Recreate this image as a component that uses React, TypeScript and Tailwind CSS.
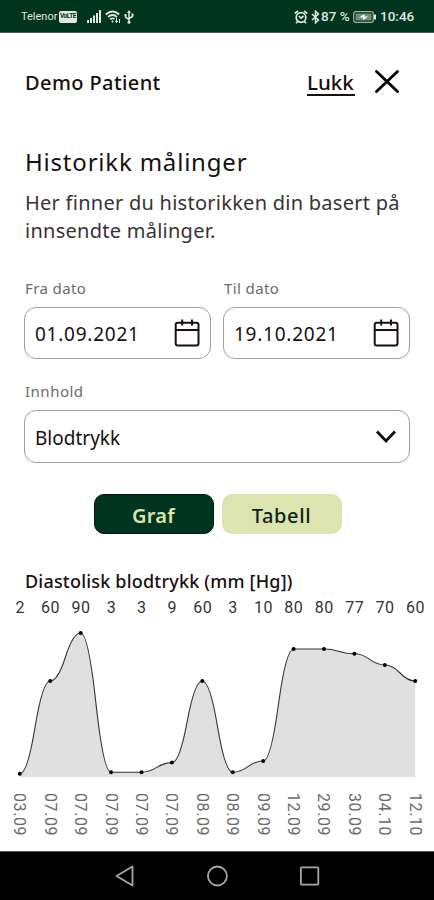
import React from "react"

const measurements = [
  { value: 2, date: "03.09" },
  { value: 60, date: "07.09" },
  { value: 90, date: "07.09" },
  { value: 3, date: "07.09" },
  { value: 3, date: "07.09" },
  { value: 9, date: "07.09" },
  { value: 60, date: "08.09" },
  { value: 3, date: "08.09" },
  { value: 10, date: "09.09" },
  { value: 80, date: "12.09" },
  { value: 80, date: "29.09" },
  { value: 77, date: "30.09" },
  { value: 70, date: "04.10" },
  { value: 60, date: "12.10" },
]

const STEP = 30.42
const BASE = 157

const points = measurements.map((m, i) => ({
  x: 19.8 + i * STEP,
  y: BASE - m.value * 1.6,
}))

const line = points.slice(1).reduce((d, p, i) => {
  const prev = points[i]
  const midX = (prev.x + p.x) / 2
  const midY = (prev.y + p.y) / 2
  return `${d} Q ${(prev.x + midX) / 2} ${prev.y} ${midX} ${midY} Q ${(p.x + midX) / 2} ${p.y} ${p.x} ${p.y}`
}, `M ${points[0].x} ${points[0].y}`)

const area = `${line} V ${BASE} H ${points[0].x} Z`

const CalendarIcon = () => (
  <svg width="26" height="30" viewBox="0 0 26 30" fill="none" stroke="#1c0f14" strokeWidth="2">
    <rect x="1.7" y="4.7" width="22.8" height="22.8" rx="2" />
    <path d="M1.7 12H24.5M8.2 1.5V7.5M18 1.5V7.5" />
  </svg>
)

const DateField = ({ label, value }: { label: string; value: string }) => (
  <div className="w-[187px]">
    <div className="h-[27px] pl-[1px] text-[15px] leading-[16px] tracking-[0.4px] text-[#6b6b6b]">
      {label}
    </div>
    <div className="flex h-[52px] items-center justify-between rounded-[12px] border border-[#a0a0a0] pr-[10px] pl-[10px]">
      <span className="pt-[3px] text-[19px] tracking-[0.75px]">{value}</span>
      <CalendarIcon />
    </div>
  </div>
)

const StatusBar = () => (
  <div className="flex h-[33px] items-center justify-between border-b border-[#4b5a50] bg-[#01341f] pt-[1px] pr-[19px] pl-[21px] font-[Roboto] text-[#dfe8e2]">
    <div className="flex items-center">
      <span className="w-[36px] pt-[2px] text-[11px]">Telenor</span>
      <span className="ml-[2px] flex h-[12px] w-[18px] items-center justify-center overflow-hidden rounded-[2px] bg-[#dfe8e2] text-[6.5px] font-bold tracking-[-0.4px] text-[#01341f]">
        VoLTE
      </span>
      <svg className="ml-[10px]" width="14" height="13" viewBox="0 0 14 13" fill="currentColor">
        <path d="M0 10h2v3H0zM3 8h2v5H3zM6 5.500h2v7.500H6zM9 3h2v10H9zM12 0h2v13h-2z" />
      </svg>
      <svg className="ml-[4px]" width="16" height="14" viewBox="0 0 16 14" fill="none" stroke="currentColor" strokeWidth="1.700">
        <path d="M.8 4.500Q7.500-1.500 14.200 4.500M3 7Q7.500 3 12 7M5.200 9.400Q7.500 7.400 9.500 9" />
        <circle cx="7.500" cy="11.500" r="1" fill="currentColor" stroke="none" />
        <path d="M11.500 8v4.500M10 11l1.500 1.500L13 11M14.500 13V9" strokeWidth="1" />
      </svg>
      <svg className="ml-[3px]" width="10" height="14" viewBox="0 0 10 14" fill="none" stroke="currentColor" strokeWidth="1.500">
        <path d="M5 2v10M1.500 5v2.200L5 9.500M8.500 4.500v2L5 8.500" />
        <path d="M5 0l2 3H3zM.5 4h2v2h-2zM7.500 3.500h2v2h-2z" fill="currentColor" stroke="none" />
        <circle cx="5" cy="12.300" r="1.500" fill="currentColor" stroke="none" />
      </svg>
    </div>
    <div className="flex items-center">
      <svg width="14" height="14" viewBox="0 0 14 14" fill="none" stroke="currentColor" strokeWidth="1.700">
        <circle cx="7" cy="7.500" r="4.800" />
        <path d="M.8 3.500L4 1M13.200 3.500L10 1M4.800 6L7 8.200L9.500 6M3.500 11.500L2 13.200M10.500 11.500L12 13.200" />
      </svg>
      <svg className="ml-[3px]" width="9" height="14" viewBox="0 0 9 14" fill="none" stroke="currentColor" strokeWidth="1.500">
        <path d="M1 4L7.500 10L4.500 12.800V1.200L7.500 4L1 10" />
      </svg>
      <span className="ml-[1px] w-[32px] text-[13.500px] font-medium whitespace-nowrap">87 %</span>
      <svg width="24" height="12" viewBox="0 0 24 12" fill="none">
        <rect x=".7" y=".7" width="19.600" height="10.600" rx="2" stroke="#9db3a5" strokeWidth="1.200" />
        <rect x="2.500" y="2.500" width="16" height="7" fill="#6d8f7b" />
        <path d="M6 6.500L11.500 3V5.500H15L10 9V6.500Z" fill="#fff" />
        <path d="M22 3.500V8.500" stroke="#dfe8e2" strokeWidth="2" />
      </svg>
      <span className="ml-[3px] w-[35px] text-[13.500px] font-medium whitespace-nowrap">10:46</span>
    </div>
  </div>
)

const NavBar = () => (
  <div className="flex h-[49px] items-center justify-center gap-[72px] border-t border-[#555] bg-black pb-[1px]">
    <svg width="20" height="22" viewBox="0 0 20 22" fill="none" stroke="#a6a6a6" strokeWidth="1.800" strokeLinejoin="round">
      <path d="M18.500 1.500V20.500L2.500 11Z" />
    </svg>
    <svg width="22" height="22" viewBox="0 0 22 22" fill="none" stroke="#a6a6a6" strokeWidth="1.800">
      <circle cx="11.400" cy="11" r="9.500" />
    </svg>
    <svg width="20" height="20" viewBox="0 0 20 20" fill="none" stroke="#a6a6a6" strokeWidth="1.800">
      <rect x=".9" y="1.300" width="17.400" height="17.400" rx="1" />
    </svg>
  </div>
)

const Chart = () => (
  <div className="font-[Roboto]">
    <div className="ml-[5px] flex h-[20px] text-[16px] leading-[20px] tracking-[0.5px] text-[#333]">
      {measurements.map((m, i) => (
        <span key={i} className="w-[30.42px] shrink-0 text-center">
          {m.value}
        </span>
      ))}
    </div>
    <svg className="mt-[2px] block" width="434" height="158" viewBox="0 0 434 158">
      <path d={area} fill="#e0e0e0" />
      <path d={line} fill="none" stroke="#333" strokeWidth="1.1" />
      {points.map((p, i) => (
        <circle key={i} cx={p.x} cy={p.y} r="2" fill="#000" />
      ))}
    </svg>
    <div className="ml-[4px] flex h-[50px] pt-[15px] text-[16px] tracking-[0.6px] text-[#6a6a6a]">
      {measurements.map((m, i) => (
        <span key={i} className="w-[30.42px] shrink-0 leading-[30px] [writing-mode:vertical-rl]">
          {m.date}
        </span>
      ))}
    </div>
  </div>
)

const App = () => {
  return (
    <div className="flex h-[900px] w-[434px] flex-col overflow-hidden bg-white font-['Noto_Sans',sans-serif] text-[#17100f]">
      <StatusBar />
      <main className="flex-1">
        <header className="flex h-[100px] items-center justify-between pr-[34px] pl-[25px]">
          <h1 className="text-[20px] font-medium tracking-[0.4px]">Demo Patient</h1>
          <div className="flex items-center">
            <a className="w-[48px] border-b-2 border-current text-[20.5px] leading-[23px] font-medium">Lukk</a>
            <svg className="ml-[19px]" width="26" height="26" viewBox="0 0 26 26" fill="none" stroke="#000" strokeWidth="2.800" strokeLinecap="round">
              <path d="M2.500 1.500L23.500 21.500M23.500 1.500L2.500 21.500" />
            </svg>
          </div>
        </header>

        <section className="px-[24px]">
          <h2 className="h-[56px] pl-[1px] pt-[12px] text-[24px] leading-[34px] tracking-[0.8px]">
            Historikk målinger
          </h2>
          <p className="h-[91px] pl-[1px] text-[20px] leading-[28px] tracking-[0.26px] whitespace-nowrap text-[#393235]">
            Her finner du historikken din basert på
            <br />
            innsendte målinger.
          </p>
          <div className="flex justify-between">
            <DateField label="Fra dato" value="01.09.2021" />
            <DateField label="Til dato" value="19.10.2021" />
          </div>
          <div className="mt-[24px] h-[27px] pl-[1px] text-[15px] leading-[16px] tracking-[0.5px] text-[#6b6b6b]">
            Innhold
          </div>
          <div className="flex h-[53px] items-center justify-between rounded-[12px] border border-[#a0a0a0] pr-[12px] pl-[10px]">
            <span className="pt-[3px] text-[19px]">Blodtrykk</span>
            <svg width="22" height="14" viewBox="0 0 22 14" fill="none" stroke="#150a0e" strokeWidth="2.800">
              <path d="M2 1.500L11 11L20 1.500" />
            </svg>
          </div>
          <div className="mt-[31px] flex justify-center gap-[8px] pl-[1px]">
            <button className="h-[40px] w-[120px] rounded-[10px] border border-[#011a10] bg-[#01341f] pt-[3px] text-[20px] font-semibold tracking-[0.3px] text-[#dce5b0]">
              Graf
            </button>
            <button className="h-[40px] w-[120px] rounded-[10px] bg-[#dce5b0] pt-[3px] text-[20px] font-medium tracking-[0.6px] text-[#0e2418]">
              Tabell
            </button>
          </div>
          <h3 className="mt-[35px] h-[29px] pl-[1px] text-[18px] leading-[24px] font-medium tracking-[0.2px] whitespace-nowrap">
            Diastolisk blodtrykk (mm [Hg])
          </h3>
        </section>
        <Chart />
      </main>
      <NavBar />
    </div>
  )
}

export default App
